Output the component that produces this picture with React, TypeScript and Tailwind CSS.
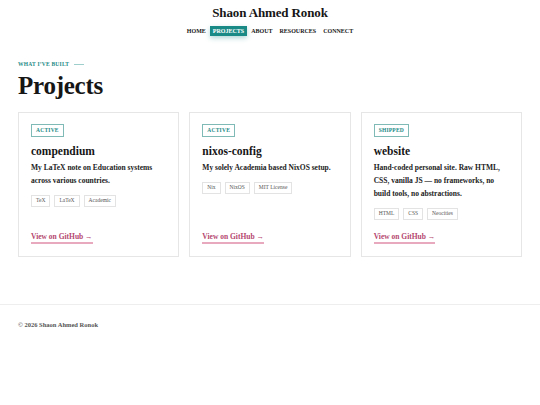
import React from "react";

const serif = { fontFamily: '"Liberation Serif", "DejaVu Serif", serif' };

const projects = [
  {
    status: "ACTIVE",
    name: "compendium",
    desc: "My LaTeX note on Education systems across various countries.",
    tags: ["TeX", "LaTeX", "Academic"],
  },
  {
    status: "ACTIVE",
    name: "nixos-config",
    desc: "My solely Academia based NixOS setup.",
    tags: ["Nix", "NixOS", "MIT License"],
  },
  {
    status: "SHIPPED",
    name: "website",
    desc: "Hand-coded personal site. Raw HTML, CSS, vanilla JS — no frameworks, no build tools, no abstractions.",
    tags: ["HTML", "CSS", "Neocities"],
  },
];

export default function App() {
  return (
    <div className="w-[540px] min-h-[405px] bg-white text-[#161616]" style={serif}>
      <header className="flex flex-col items-center pt-[5px]">
        <div className="text-[13px] font-bold leading-[16px] tracking-[-0.01em]">Shaon Ahmed Ronok</div>
        <nav className="mt-[5px] flex items-center gap-[3px] text-[6px] font-bold uppercase leading-[8px]">
          <span className="px-[1px] py-[1px]">Home</span>
          <span className="bg-[#1a8a86] px-[3px] py-[1px] text-white shadow-[0_2px_5px_rgba(26,138,134,0.35)]">Projects</span>
          <span className="px-[1px] py-[1px]">About</span>
          <span className="px-[3px] py-[1px]">Resources</span>
          <span className="px-[1px] py-[1px]">Connect</span>
        </nav>
      </header>

      <main className="px-[18px] pt-[25px]">
        <div className="flex items-center gap-[5px] text-[5.5px] font-bold uppercase leading-[7px] tracking-[0.04em] text-[#1a8a86]">
          <span>What I’ve built</span>
          <span className="h-px w-[10px] bg-[#9fcfcc]" />
        </div>
        <h1 className="mt-[4px] text-[25px] font-bold leading-[28px] tracking-[-0.01em]">Projects</h1>

        <div className="mt-[12px] grid grid-cols-3 gap-[10px]">
          {projects.map((p) => (
            <div key={p.name} className="flex flex-col border border-[#e6e6e6] px-[12px] pt-[11px] pb-[12px]">
              <div className="flex">
                <span className="inline-flex h-[13px] items-center border border-[#7fbab6] px-[4px] text-[5.5px] font-bold leading-none tracking-[0.04em] text-[#1a8a86]">
                  {p.status}
                </span>
              </div>
              <div className="mt-[6px] text-[11.5px] font-bold leading-[16px]">{p.name}</div>
              <p className="mt-[2px] text-[7.5px] font-bold leading-[13px] text-[#222]">{p.desc}</p>
              <div className="mt-[8px] flex gap-[4px]">
                {p.tags.map((t) => (
                  <span key={t} className="inline-flex h-[12px] items-center border border-[#e3e3e3] px-[4px] text-[5.5px] leading-none text-[#555]">
                    {t}
                  </span>
                ))}
              </div>
              <div className="mt-auto flex pt-[12px]">
                <span className="inline-block border-b-2 border-[#e8a9bf] pb-[1px] text-[7.5px] font-bold leading-[9px] text-[#b5476f]">
                  View on GitHub →
                </span>
              </div>
            </div>
          ))}
        </div>
      </main>

      <footer className="mt-[47px] border-t border-[#eeeeee] px-[18px] pt-[16px] text-[6.5px] font-semibold leading-[8px] text-[#555]">
        © 2026 Shaon Ahmed Ronok
      </footer>
    </div>
  );
}
